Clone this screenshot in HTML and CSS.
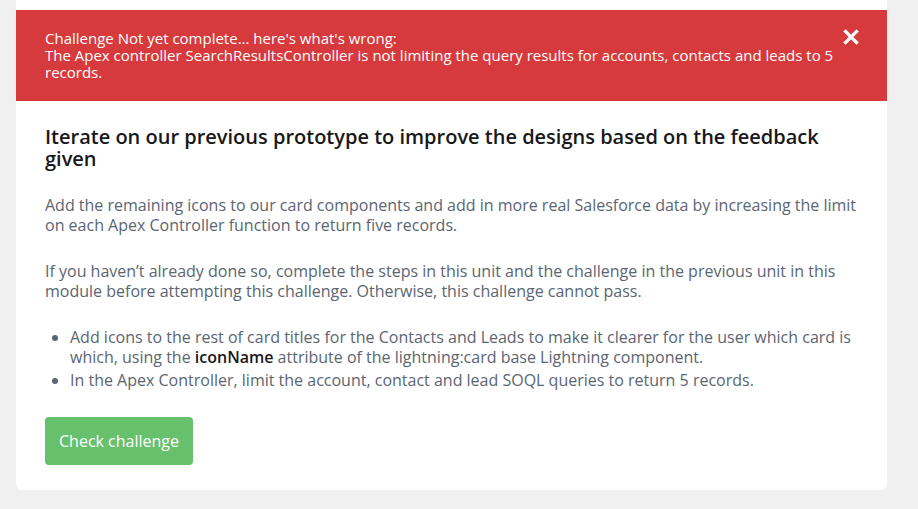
FILE: index.html
```html
<!DOCTYPE html>
<html lang="en">
<head>
    <meta charset="UTF-8">
    <title>Challenge</title>
    <link rel="stylesheet" href="styles.css">
</head>
<body>

<div class="page">
    <div class="card">
        <div class="alert">
            <div class="alert-text">
                Challenge Not yet complete... here's what's wrong:<br>
                The Apex controller SearchResultsController is not limiting the query results for accounts, contacts and leads to 5 records.
            </div>
            <button class="alert-close" aria-label="Close">
                <svg width="16" height="16" viewBox="0 0 16 16">
                    <path d="M2.5 2.5 L13.5 13.5 M13.5 2.5 L2.5 13.5" stroke="#fff" stroke-width="3.2" stroke-linecap="square"/>
                </svg>
            </button>
        </div>

        <div class="card-body">
            <h2>Iterate on our previous prototype to improve the designs based on the feedback given</h2>

            <p>Add the remaining icons to our card components and add in more real Salesforce data by increasing the limit on each Apex Controller function to return five records.</p>

            <p>If you haven’t already done so, complete the steps in this unit and the challenge in the previous unit in this module before attempting this challenge. Otherwise, this challenge cannot pass.</p>

            <ul>
                <li>Add icons to the rest of card titles for the Contacts and Leads to make it clearer for the user which card is which, using the <strong>iconName</strong> attribute of the lightning:card base Lightning component.</li>
                <li>In the Apex Controller, limit the account, contact and lead SOQL queries to return 5 records.</li>
            </ul>

            <button class="check-btn">Check challenge</button>
        </div>
    </div>
</div>

</body>
</html>
```

FILE: styles.css
```css
body {
    margin: 0;
    background-color: #f0f0f0;
    font-family: "Open Sans", Arial, sans-serif;
}
.page {
    padding: 0 31px 18px 16px;
}
.card {
    background-color: #fff;
    border-radius: 0 0 6px 6px;
    padding-top: 10px;
}
.alert {
    display: flex;
    align-items: flex-start;
    background-color: #d63a3c;
    color: #fff;
    padding: 20px 28px 20px 29px;
    font-size: 15px;
    line-height: 17px;
}
.alert-text {
    flex: 1;
}
.alert-close {
    background: none;
    border: none;
    padding: 0;
    margin-left: 4px;
    margin-top: -1px;
    cursor: pointer;
}
.card-body {
    padding: 25px 28px 25px 29px;
}
h2 {
    margin: 0 0 25px;
    font-size: 20px;
    line-height: 22px;
    font-weight: 600;
    color: #181818;
}
p {
    margin: 0 0 26px;
    font-size: 16px;
    line-height: 20px;
    color: #5b6572;
}
ul {
    margin: 0 0 27px;
    padding-left: 25px;
    font-size: 16px;
    line-height: 20px;
    color: #5b6572;
}
li {
    margin-bottom: 3px;
}
strong {
    font-weight: 600;
    color: #181818;
}
.check-btn {
    background-color: #66c06c;
    color: #fff;
    border: none;
    border-radius: 4px;
    font-family: inherit;
    font-size: 16px;
    padding: 13px 14px;
    cursor: pointer;
}
```
